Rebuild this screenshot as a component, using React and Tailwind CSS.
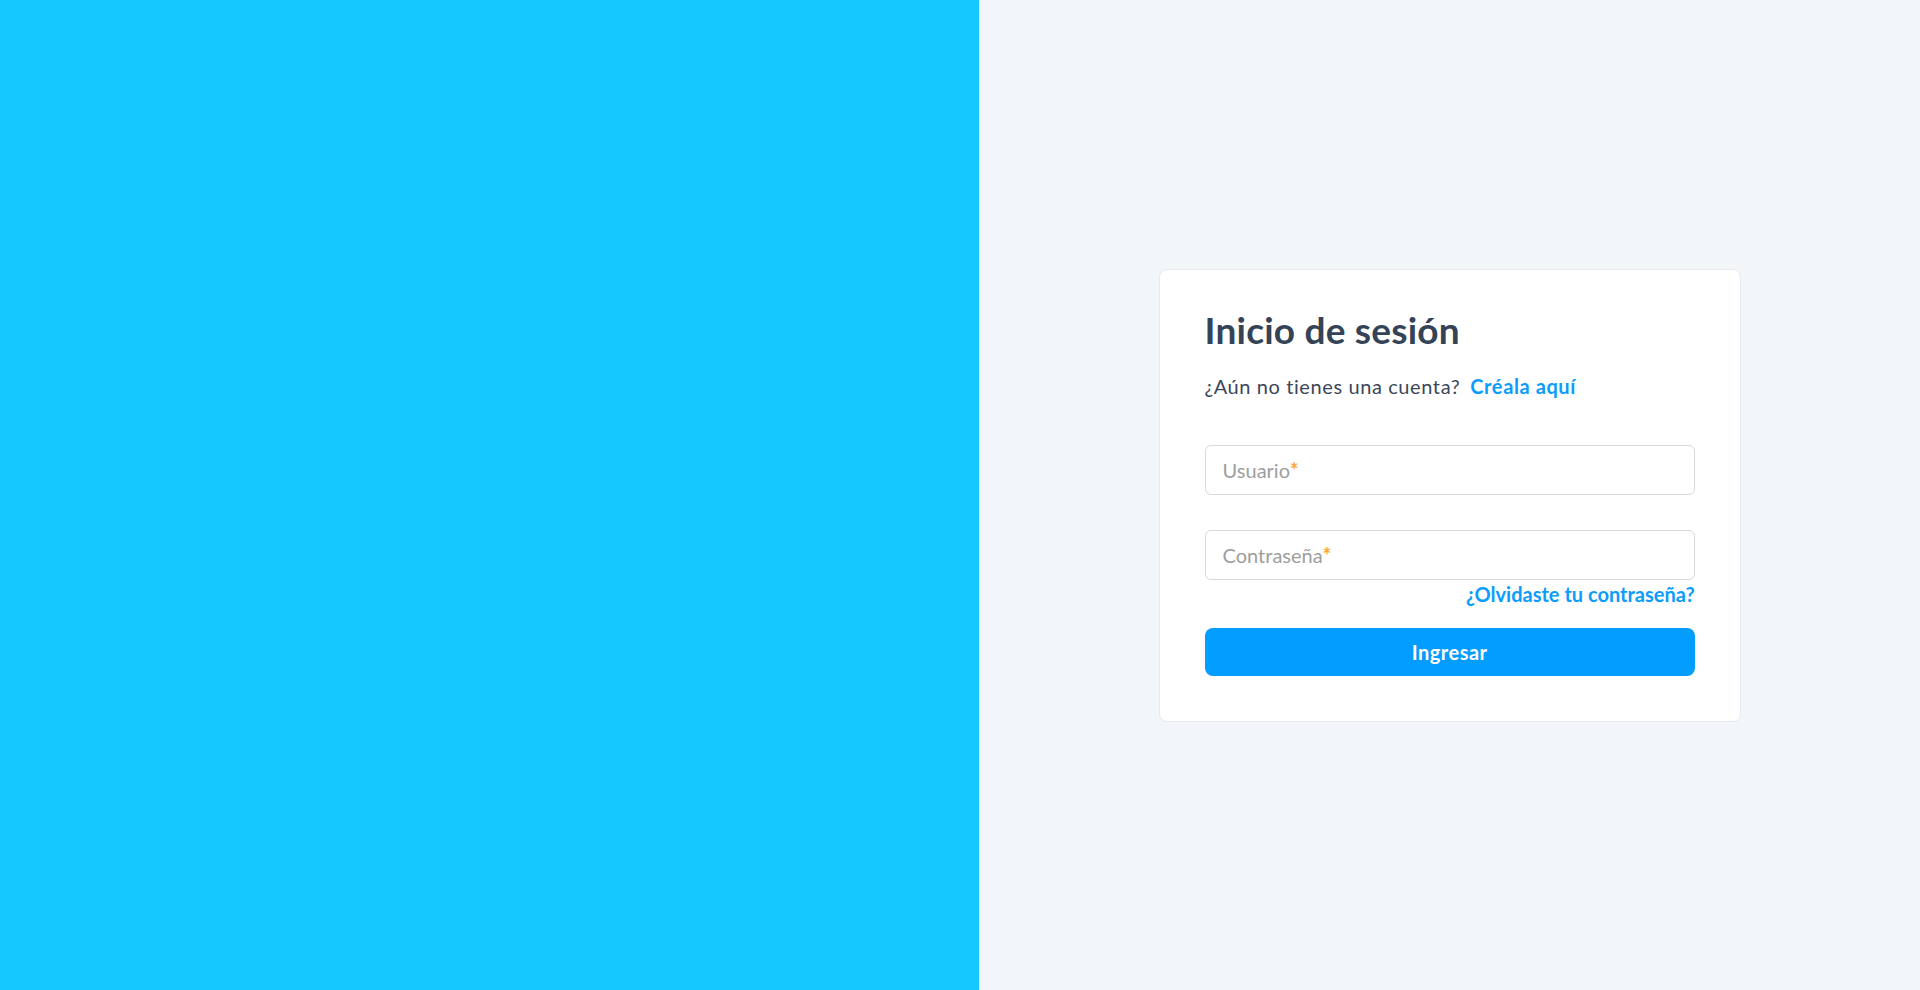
export default function App() {
  return (
    <div className="flex h-screen w-full font-['Lato',sans-serif]">
      {/* panel izquierdo */}
      <div className="w-[51%] bg-[#15c8ff]" />

      {/* formulario */}
      <div className="flex flex-1 items-center justify-center bg-[#f3f6f9]">
        <div className="w-[582px] rounded-lg border border-[#e6e9ed] bg-white px-[45px] pt-[38px] pb-[45px]">
          <h1 className="text-[37px] font-bold leading-[44px] tracking-[0.2px] text-[#354357]">Inicio de sesión</h1>
          <p className="mt-[20px] text-[20px] leading-[28px] tracking-[0.6px] text-[#3b4658]">
            ¿Aún no tienes una cuenta?
            <a href="#" className="ml-[10px] font-bold text-[#0b9cfc]">Créala aquí</a>
          </p>

          <div className="mt-[45px] flex h-[50px] items-center rounded-md border border-[#d6d8db] px-[17px] text-[20px]">
            <span className="text-[#9e9e9e]">Usuario</span>
            <span className="font-bold text-[#f8a534]">*</span>
          </div>

          <div className="mt-[35px] flex h-[50px] items-center rounded-md border border-[#d6d8db] px-[17px] text-[20px]">
            <span className="text-[#9e9e9e]">Contraseña</span>
            <span className="font-bold text-[#f8a534]">*</span>
          </div>

          <div className="mt-[2px] flex justify-end">
            <a href="#" className="text-[20px] font-bold leading-[24px] text-[#0b9cfc]">¿Olvidaste tu contraseña?</a>
          </div>

          <button className="mt-[22px] h-[48px] w-full rounded-lg bg-[#039dff] text-[20px] font-bold tracking-[0.5px] text-white">
            Ingresar
          </button>
        </div>
      </div>
    </div>
  );
}
